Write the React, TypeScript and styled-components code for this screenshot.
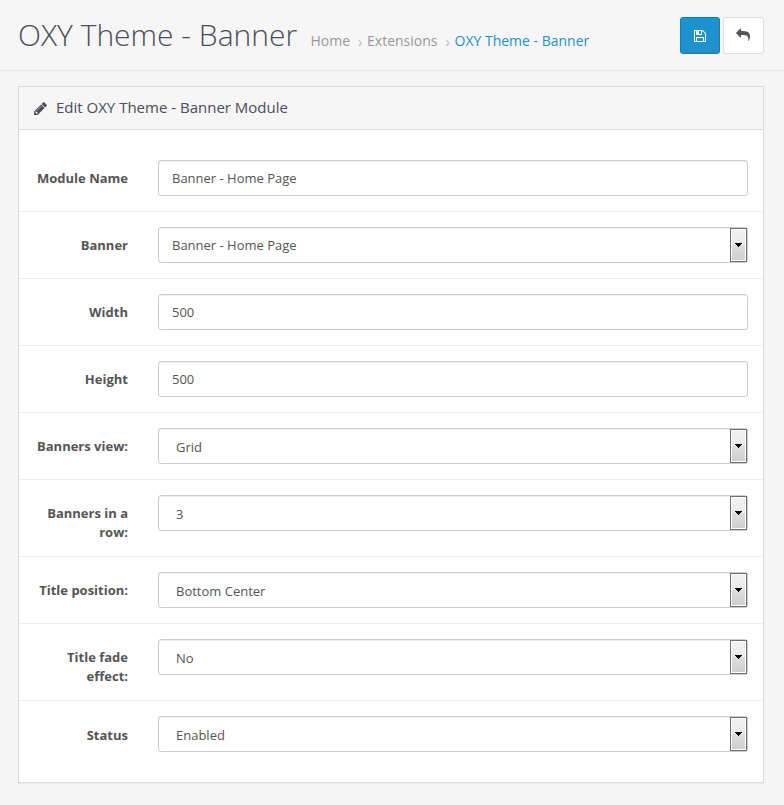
import React from "react";
import styled, { createGlobalStyle } from "styled-components";

const GlobalStyle = createGlobalStyle`
  * { box-sizing: border-box; }
  body {
    margin: 0;
    background: #f5f5f5;
    color: #555;
    font: 13px/19px "Open Sans", "Liberation Sans", sans-serif;
  }
`;

const Page = styled.div`
  min-height: 805px;
`;

const PageHeader = styled.header`
  display: flex;
  align-items: flex-start;
  height: 71px;
  padding: 17px 20px 0 18px;
  background: #f6f6f6;
  border-bottom: 1px solid #e7e7e7;
`;

const Title = styled.h1`
  margin: 0;
  width: 292.5px;
  font-size: 30px;
  line-height: 36px;
  font-weight: 300;
  color: #4c4d5a;
  white-space: nowrap;
`;

const Breadcrumb = styled.nav`
  display: flex;
  flex: 1;
  padding-top: 14px;
  font-size: 14px;
  line-height: 20px;
  white-space: nowrap;
`;

const Crumb = styled.a<{ $active?: boolean }>`
  color: ${(p) => (p.$active ? "#1e91cf" : "#999")};
`;

const Separator = styled.span`
  width: 17px;
  padding: 1px 0 0 8px;
  color: #bbb;
`;

const Actions = styled.div`
  display: flex;
  gap: 3px;
`;

const ActionButton = styled.button<{ $primary?: boolean }>`
  display: flex;
  align-items: center;
  justify-content: center;
  width: ${(p) => (p.$primary ? 40 : 41)}px;
  height: 37px;
  padding: ${(p) => (p.$primary ? "0" : "0 1px 1px 0")};
  border: 1px solid ${(p) => (p.$primary ? "#1978ab" : "#ddd")};
  border-radius: 3px;
  background: ${(p) => (p.$primary ? "#1e91cf" : "#fff")};
  color: ${(p) => (p.$primary ? "#fff" : "#555")};
`;

const Panel = styled.section`
  margin: 15px 20px 0 18px;
  border: 1px solid #dcdcdc;
  background: #fff;
  box-shadow: 0 1px 1px rgba(0, 0, 0, 0.05);
`;

const PanelHeading = styled.div`
  display: flex;
  align-items: center;
  height: 43px;
  padding: 0 14px;
  gap: 8px;
  border-bottom: 1px solid #dcdcdc;
  background: #f6f6f6;
  color: #4c4d5a;
`;

const PanelTitle = styled.h3`
  margin: 0 0 2px;
  font-size: 15px;
  line-height: 20px;
  font-weight: 400;
`;

const Form = styled.form`
  padding: 15px 0;
`;

const Label = styled.label`
  margin-bottom: -1px;
  padding: 9px 0 0 15px;
  text-align: right;
  font-weight: 700;
`;

const FormGroup = styled.div`
  display: grid;
  grid-template-columns: 109px 590px;
  column-gap: 30px;
  padding: 15px 0;

  & + & {
    border-top: 1px solid #ededed;
  }

  &:last-child ${Label} {
    padding-top: 10px;
  }
`;

const Input = styled.input`
  width: 100%;
  height: 36px;
  padding: 0 13px;
  border: 1px solid #ccc;
  border-radius: 3px;
  background: #fff;
  box-shadow: inset 0 1px 1px rgba(0, 0, 0, 0.075);
  color: #555;
  font: inherit;
`;

const Select = styled.div<{ $indented: boolean }>`
  display: flex;
  align-items: flex-start;
  justify-content: space-between;
  height: 36px;
  padding-left: ${(p) => (p.$indented ? 17 : 13)}px;
  border: 1px solid #ccc;
  border-radius: 3px;
  background: #fff;
  box-shadow: inset 0 1px 1px rgba(0, 0, 0, 0.075);
`;

const SelectValue = styled.span<{ $indented: boolean }>`
  padding-top: ${(p) => (p.$indented ? 9 : 8)}px;
`;

const SelectArrow = styled.span`
  display: flex;
  align-items: center;
  justify-content: center;
  width: 17px;
  height: 34px;
  border: 1px solid #707070;
  box-shadow: inset 0 0 0 1px #fff;
  background: linear-gradient(#f2f2f2 0%, #ebebeb 50%, #dddddd 50%, #cfcfcf 100%);
`;

const iconPaths = {
  save: "M512 1536h768v-384h-768v384zm896 0h128v-896q0-14-10-38.5t-20-34.5l-281-281q-10-10-34-20t-39-10v416q0 40-28 68t-68 28h-576q-40 0-68-28t-28-68v-416h-128v1280h128v-416q0-40 28-68t68-28h832q40 0 68 28t28 68v416zm-384-928v-320q0-13-9.5-22.5t-22.5-9.5h-192q-13 0-22.5 9.5t-9.5 22.5v320q0 13 9.5 22.5t22.5 9.5h192q13 0 22.5-9.5t9.5-22.5zm640 32v928q0 40-28 68t-68 28h-1344q-40 0-68-28t-28-68v-1344q0-40 28-68t68-28h928q40 0 88 20t76 48l280 280q28 28 48 76t20 88z",
  pencil: "M491 1536l91-91-235-235-91 91v107h128v128h107zm523-928q0-22-22-22-10 0-17 7l-542 542q-7 7-7 17 0 22 22 22 10 0 17-7l542-542q7-7 7-17zm-54-192l416 416-832 832h-416v-416zm683 96q0 53-37 90l-166 166-416-416 166-165q36-38 90-38 53 0 91 38l235 234q37 39 37 91z",
  reply: "M1792 640q0 26-19 45l-512 512q-19 19-45 19t-45-19-19-45v-256h-224q-98 0-175.5 6t-154 21.5-133 42.5-105.5 69.5-80 101-48.5 138.5-17.5 181q0 55 5 123 0 6 2.5 23.5t2.5 26.5q0 15-8.5 25t-23.5 10q-16 0-28-17-7-9-13-22t-13.5-30-10.5-24q-127-285-127-451 0-199 53-333 162-403 875-403h224v-256q0-26 19-45t45-19 45 19l512 512q19 19 19 45z",
};

function Icon({ name, size }: { name: keyof typeof iconPaths; size: number }) {
  return (
    <svg width={size} height={size} viewBox="0 0 1792 1792" fill="currentColor" aria-hidden>
      <path d={iconPaths[name]} transform={name === "reply" ? "translate(1792 0) scale(-1 1)" : undefined} />
    </svg>
  );
}

type Field = { label: string; value: string; kind: "text" | "select"; indented?: boolean };

const fields: Field[] = [
  { label: "Module Name", value: "Banner - Home Page", kind: "text" },
  { label: "Banner", value: "Banner - Home Page", kind: "select" },
  { label: "Width", value: "500", kind: "text" },
  { label: "Height", value: "500", kind: "text" },
  { label: "Banners view:", value: "Grid", kind: "select", indented: true },
  { label: "Banners in a row:", value: "3", kind: "select", indented: true },
  { label: "Title position:", value: "Bottom Center", kind: "select", indented: true },
  { label: "Title fade effect:", value: "No", kind: "select", indented: true },
  { label: "Status", value: "Enabled", kind: "select", indented: true },
];

function SelectBox({ value, indented = false }: { value: string; indented?: boolean }) {
  return (
    <Select $indented={indented}>
      <SelectValue $indented={indented}>{value}</SelectValue>
      <SelectArrow>
        <svg width="7" height="4" viewBox="0 0 7 4" shapeRendering="crispEdges" aria-hidden>
          <path d="M0 0h7v1h-1v1h-1v1h-1v1h-1v-1h-1v-1h-1v-1h-1z" fill="#000" />
        </svg>
      </SelectArrow>
    </Select>
  );
}

export default function App() {
  return (
    <Page>
      <GlobalStyle />
      <PageHeader>
        <Title>OXY Theme - Banner</Title>
        <Breadcrumb>
          <Crumb>Home</Crumb>
          <Separator>›</Separator>
          <Crumb>Extensions</Crumb>
          <Separator>›</Separator>
          <Crumb $active>OXY Theme - Banner</Crumb>
        </Breadcrumb>
        <Actions>
          <ActionButton $primary aria-label="Save">
            <Icon name="save" size={14} />
          </ActionButton>
          <ActionButton aria-label="Back">
            <Icon name="reply" size={14} />
          </ActionButton>
        </Actions>
      </PageHeader>
      <Panel>
        <PanelHeading>
          <Icon name="pencil" size={15} />
          <PanelTitle>Edit OXY Theme - Banner Module</PanelTitle>
        </PanelHeading>
        <Form>
          {fields.map((f) => (
            <FormGroup key={f.label}>
              <Label>{f.label}</Label>
              {f.kind === "text" ? (
                <Input defaultValue={f.value} />
              ) : (
                <SelectBox value={f.value} indented={f.indented} />
              )}
            </FormGroup>
          ))}
        </Form>
      </Panel>
    </Page>
  );
}
